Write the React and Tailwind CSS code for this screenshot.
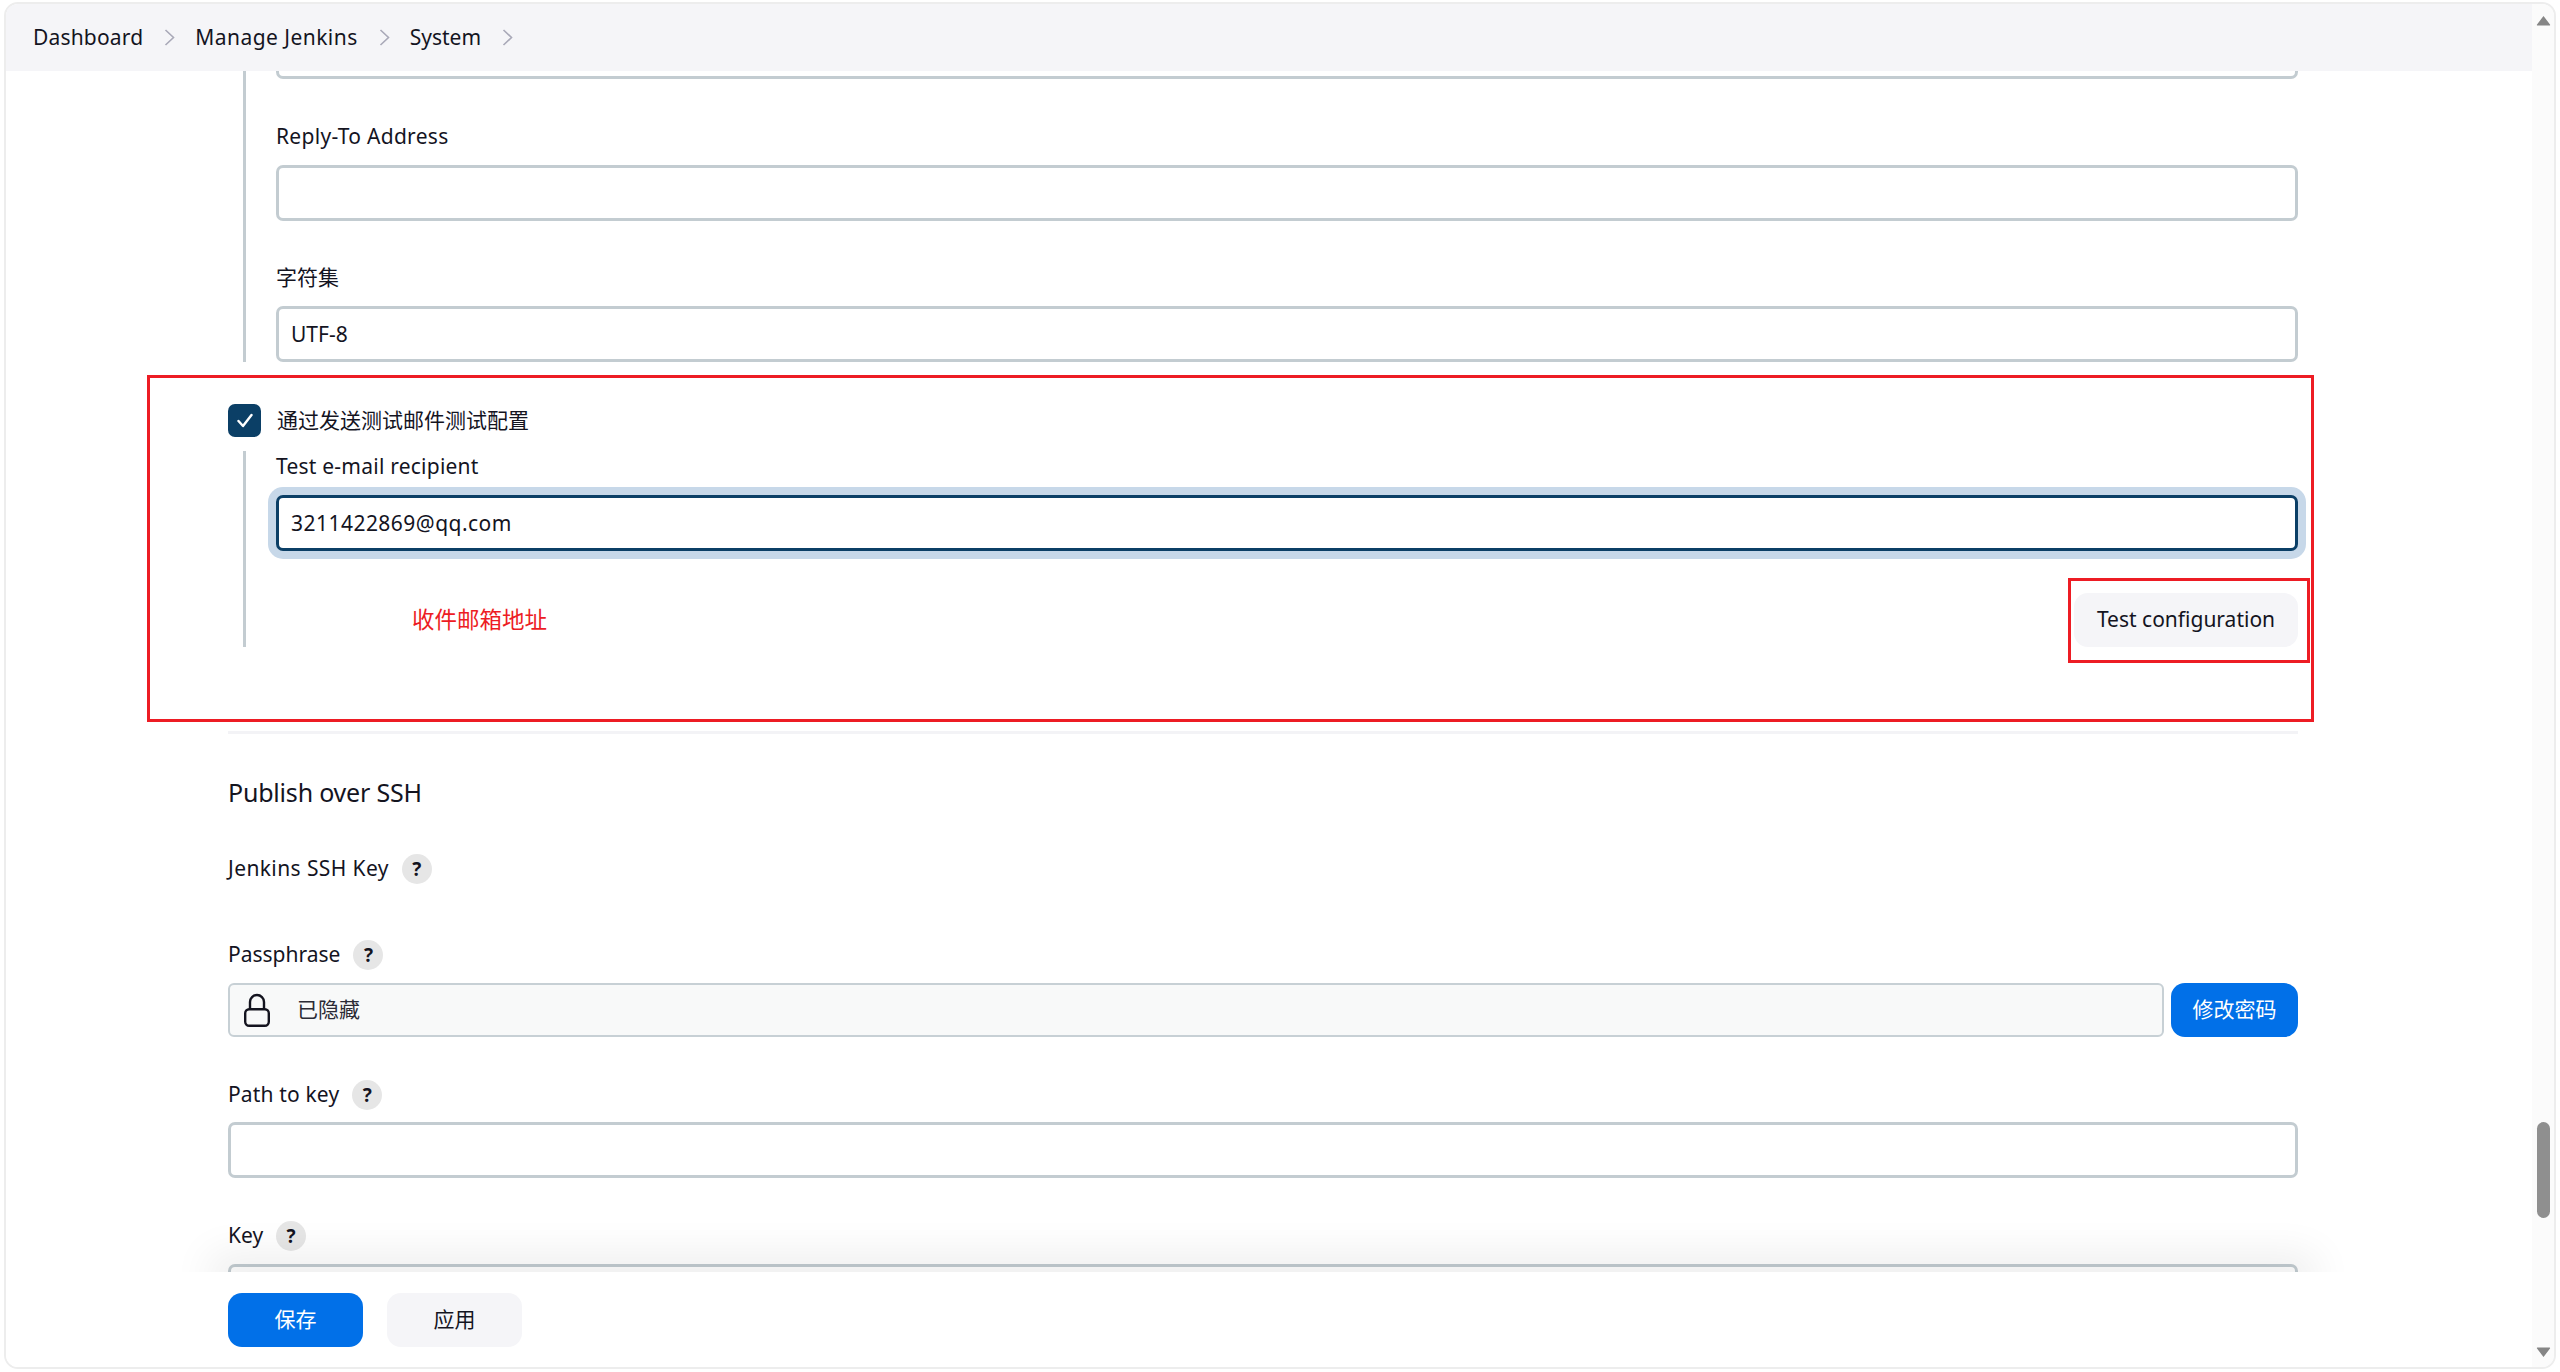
import React from 'react';

const textInput = 'block w-full h-[56px] rounded-[7px] border-[3px] border-[#c3ccd1] bg-white px-[12px] text-[21px] text-[#14141f] outline-none';

function Crumb({ label, className }) {
  return (
    <div className="flex items-center">
      <span className={className}>{label}</span>
      <svg className="ml-[21px] mr-[20px]" width="11" height="17" viewBox="0 0 11 17" fill="none">
        <path d="M1.5 1l8 7.5-8 7.5" stroke="#a9a9b8" strokeWidth="1.6" />
      </svg>
    </div>
  );
}

function Help() {
  return (
    <span className="ml-[13px] flex h-[30px] w-[30px] items-center justify-center rounded-full bg-[#e6e6e6] text-[19px] font-bold text-[#14141f]">?</span>
  );
}

function HelpLabel({ label, className, textClass }) {
  return (
    <div className={`flex h-[30px] items-center ${className}`}>
      <span className={textClass}>{label}</span>
      <Help />
    </div>
  );
}

function Arrow({ up }) {
  return (
    <svg width="15" height="11" viewBox="0 0 15 11" className={up ? 'mx-auto' : 'mx-auto rotate-180'}>
      <path d="M7.5 1L14 9.5a.6.6 0 0 1-.5 1h-12a.6.6 0 0 1-.5-1z" fill="#868686" />
    </svg>
  );
}

function App() {
  return (
    <div className="relative h-[1372px] w-[2560px] overflow-hidden bg-white pt-[2px] pl-[4px] font-['Noto_Sans','Noto_Sans_CJK_SC',sans-serif] text-[21px] text-[#14141f]">
      <div className="flex h-[1367px] w-[2552px] overflow-hidden rounded-[14px] border-2 border-[#ededed] bg-white">
        <div className="flex w-[2526px] flex-col">
          <header className="flex h-[67px] shrink-0 items-center bg-[#f5f5f8] pl-[27px]">
            <Crumb label="Dashboard" className="tracking-[0.18px]" />
            <Crumb label="Manage Jenkins" className="tracking-[0.45px]" />
            <Crumb label="System" />
          </header>

          <main className="relative flex-1 overflow-hidden pl-[222px] pr-[234px]">
            <div className="ml-[15px] mt-[-48px] border-l-[3px] border-[#c3ccd1] pl-[30px]">
              <input className={textInput} readOnly value="" />
              <div className="mt-[43px] mb-[13px] flex h-[30px] items-center tracking-[0.3px]">Reply-To Address</div>
              <input className={textInput} readOnly value="" />
              <div className="mt-[42px] mb-[13px] flex h-[30px] items-center">字符集</div>
              <input className={textInput} readOnly value="UTF-8" />
            </div>

            <div className="mt-[42px] flex items-center gap-[16px]">
              <span className="flex h-[33px] w-[33px] items-center justify-center rounded-[7px] bg-[#0b3f66]">
                <svg width="16" height="15" viewBox="0 0 16 15" fill="none">
                  <path d="M1.5 8l4.5 5L14.5 2" stroke="#fff" strokeWidth="2.4" strokeLinecap="round" strokeLinejoin="round" />
                </svg>
              </span>
              <span>通过发送测试邮件测试配置</span>
            </div>

            <div className="ml-[15px] mt-[14px] border-l-[3px] border-[#c3ccd1] pl-[30px]">
              <div className="mb-[12px] flex h-[32px] items-center tracking-[0.23px]">Test e-mail recipient</div>
              <input className="block h-[56px] w-full rounded-[7px] border-[3px] border-[#0b3f66] bg-white px-[12px] text-[21px] tracking-[0.47px] text-[#14141f] shadow-[0_0_0_8px_#c7d8e9] outline-none" readOnly value="3211422869@qq.com" />
              <div className="mt-[42px] flex justify-end">
                <button className="h-[54px] w-[224px] rounded-[14px] bg-[#f5f5f8] text-center">Test configuration</button>
              </div>
            </div>

            <div className="mt-[84px] h-[3px] bg-[#f3f3f6]" />

            <div className="mt-[41px] flex h-[36px] items-center text-[25px] tracking-[-0.2px]">Publish over SSH</div>
            <HelpLabel label="Jenkins SSH Key" className="mt-[43px]" textClass="tracking-[0.4px]" />
            <HelpLabel label="Passphrase" className="mt-[56px]" />

            <div className="mt-[13px] flex gap-[7px]">
              <div className="flex h-[54px] flex-1 items-center rounded-[6px] border-2 border-[#c7d0d5] bg-[#f8f9f9] pl-[14px]">
                <svg width="26" height="34" viewBox="0 0 26 34" fill="none">
                  <rect x="1.2" y="16.2" width="23.6" height="16.6" rx="4" stroke="#14141f" strokeWidth="2.4" />
                  <path d="M6 16V9a7 7 0 0 1 14 0v7" stroke="#14141f" strokeWidth="2.4" />
                </svg>
                <span className="ml-[27px] text-[#2b2b35]">已隐藏</span>
              </div>
              <button className="h-[54px] w-[127px] rounded-[14px] bg-[#0170e8] text-white">修改密码</button>
            </div>

            <HelpLabel label="Path to key" className="mt-[43px]" textClass="tracking-[0.15px]" />
            <input className={`${textInput} mt-[12px]`} readOnly value="" />
            <HelpLabel label="Key" className="mt-[43px]" />
            <input className={`${textInput} mt-[13px]`} readOnly value="" />

            <div className="absolute bottom-[-10px] left-[222px] right-[234px] h-[10px] shadow-[0_0_40px_18px_rgba(0,0,0,0.07)]" />
          </main>

          <footer className="flex h-[95px] shrink-0 gap-[24px] bg-white pl-[222px] pt-[21px]">
            <button className="h-[54px] w-[135px] rounded-[14px] bg-[#0170e8] text-white">保存</button>
            <button className="h-[54px] w-[135px] rounded-[14px] bg-[#f5f5f8]">应用</button>
          </footer>
        </div>

        <div className="flex w-[22px] flex-col bg-[#fbfbfb] pt-[11px] pb-[9px]">
          <Arrow up />
          <div className="mx-auto mt-[1096px] h-[96px] w-[13px] rounded-full bg-[#8f8f8f]" />
          <div className="mt-auto"><Arrow /></div>
        </div>
      </div>

      {/* red annotations drawn on top of the screenshot */}
      <div className="absolute left-[147px] top-[375px] h-[347px] w-[2167px] border-[3px] border-[#ed1c24]" />
      <div className="absolute left-[2068px] top-[578px] h-[85px] w-[242px] border-[3px] border-[#ed1c24]" />
      <div className="absolute left-[412px] top-[604px] text-[22.5px] leading-[32px] text-[#ed1c24]">收件邮箱地址</div>
    </div>
  );
}

export default App;
